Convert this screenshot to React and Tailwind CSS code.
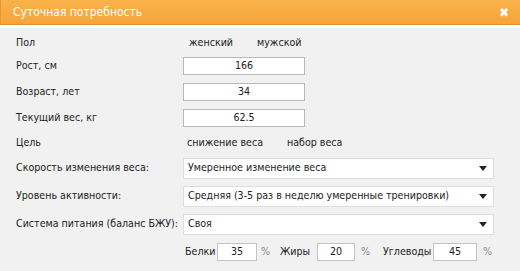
import React from 'react';

const Arrow = () => (
  <svg width="8" height="5" viewBox="0 0 8 5" className="shrink-0">
    <path d="M0 0 H8 L4 5 Z" fill="#222" />
  </svg>
);

const Row = ({ label, children, h = 'h-[26px]' }) => (
  <div className={`flex items-center ${h}`}>
    <div className="w-[167px] shrink-0 whitespace-nowrap">{label}</div>
    {children}
  </div>
);

const NumInput = ({ value }) => (
  <div className="w-[122px] h-[18px] bg-white border border-[#b9b9b9] flex items-center justify-center">
    {value}
  </div>
);

const Select = ({ value }) => (
  <div className="w-[311px] h-[21px] bg-white border border-[#dedede] flex items-center justify-between pl-[4px] pr-[6px]">
    <span>{value}</span>
    <Arrow />
  </div>
);

const Small = ({ value, w }) => (
  <div className={`${w} h-[18px] shrink-0 bg-white border border-[#c4c4c4] flex items-center justify-center`}>
    {value}
  </div>
);

export default function App() {
  return (
    <div
      className="w-[520px] h-[271px] bg-[#f1f1f1] text-[#222] text-[10.6px] overflow-hidden"
      style={{ fontFamily: '"DejaVu Sans Condensed", "DejaVu Sans", sans-serif' }}
    >
      <div className="h-[25px] bg-gradient-to-b from-[#f8b24a] to-[#f5a53a] border-b border-[#e5902a] border-l border-l-[#e9982f] flex items-center justify-between pl-[12px] pr-[11px]">
        <span className="text-white text-[12px]">Суточная потребность</span>
        <span className="text-white text-[13px] font-bold leading-none">✖</span>
      </div>
      <div className="h-[3px] bg-white" />
      <div className="pl-[16px] pt-[4px]">
        <Row label="Пол" h="h-[21px]">
          <span className="ml-[6px] w-[68px]">женский</span>
          <span>мужской</span>
        </Row>
        <Row label="Рост, см"><NumInput value="166" /></Row>
        <Row label="Возраст, лет"><NumInput value="34" /></Row>
        <Row label="Текущий вес, кг"><NumInput value="62.5" /></Row>
        <Row label="Цель" h="h-[23px]">
          <span className="ml-[4px] w-[100px]">снижение веса</span>
          <span>набор веса</span>
        </Row>
        <Row label="Скорость изменения веса:" h="h-[28px]"><Select value="Умеренное изменение веса" /></Row>
        <Row label="Уровень активности:" h="h-[28px]"><Select value="Средняя (3-5 раз в неделю умеренные тренировки)" /></Row>
        <Row label="Система питания (баланс БЖУ):" h="h-[28px]"><Select value="Своя" /></Row>
        <div className="flex items-center h-[28px] pl-[169px]">
          <span className="w-[32px] shrink-0">Белки</span>
          <Small value="35" w="w-[40px]" />
          <span className="w-[23px] shrink-0 pl-[4px] text-[#888]">%</span>
          <span className="w-[37px] shrink-0">Жиры</span>
          <Small value="20" w="w-[38px]" />
          <span className="w-[28px] shrink-0 pl-[6px] text-[#888]">%</span>
          <span className="w-[50px] shrink-0">Углеводы</span>
          <Small value="45" w="w-[44px]" />
          <span className="pl-[6px] text-[#888]">%</span>
        </div>
      </div>
    </div>
  );
}
